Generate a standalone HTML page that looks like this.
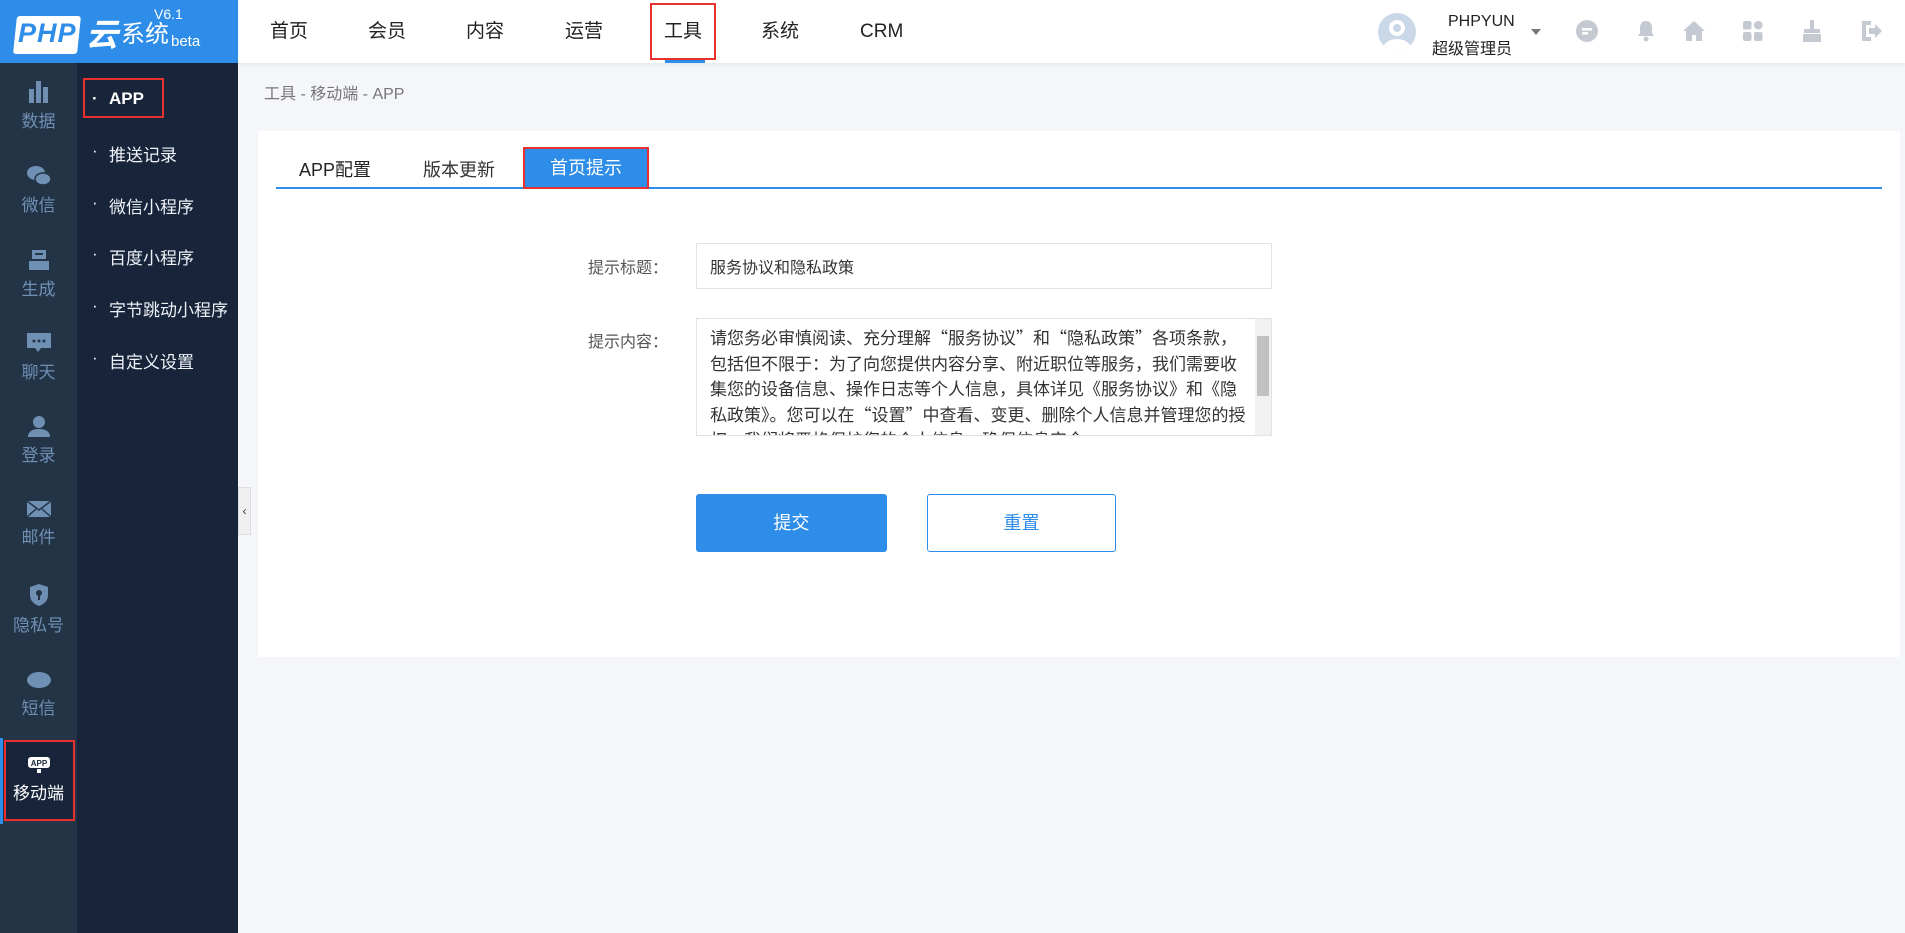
<!DOCTYPE html>
<html><head><meta charset="utf-8"><style>
*{margin:0;padding:0;box-sizing:border-box}
body{width:1905px;height:933px;overflow:hidden;background:#f4f6fa;font-family:"Liberation Sans","Noto Sans CJK SC",sans-serif;position:relative}
.a{position:absolute}
.hdr{left:238px;top:0;width:1667px;height:63px;background:#fff;box-shadow:0 2px 4px rgba(0,0,0,.06)}
.nav{top:0;height:63px;line-height:63px;font-size:19px;color:#222}
.ic{left:0;top:63px;width:77px;height:870px;background:#243447}
.sub{left:77px;top:63px;width:161px;height:870px;background:#17243a}
.it{left:0;width:77px;text-align:center;color:#6f8fb3;font-size:17px}
.it svg{display:block;margin:0 auto 4px}
.sm{left:92px;color:#eef2f7;font-size:17px}
.sm:before{content:"·";position:absolute;left:0;}
.sm span{margin-left:17px}
.hi{position:absolute;width:24px;height:24px;top:19px}
.cj{font-family:"Noto Sans CJK SC",sans-serif}
</style></head><body>
<div class="a" style="left:0;top:0;width:238px;height:63px;background:#2e8de8"></div>
<div class="a" style="left:15px;top:16px;width:64px;height:38px;background:#fff;border-radius:3px;transform:skewX(-6deg)"></div>
<div class="a" style="left:18px;top:18px;font:italic bold 27px 'Liberation Sans';color:#2e8de8;letter-spacing:1px">PHP</div>
<div class="a" style="left:86px;top:14px;font:bold italic 32px 'Noto Sans CJK SC';color:#fff;line-height:38px">云</div>
<div class="a" style="left:121px;top:20px;font-size:24px;color:#fff;line-height:30px">系统</div>
<div class="a" style="left:171px;top:33px;font-size:15px;color:#fff">beta</div>
<div class="a" style="left:154px;top:6px;font-size:14px;color:#fff">V6.1</div>
<div class="a hdr"></div>
<div class="a nav" style="left:270px">首页</div>
<div class="a nav" style="left:368px">会员</div>
<div class="a nav" style="left:466px">内容</div>
<div class="a nav" style="left:565px">运营</div>
<div class="a nav" style="left:664px">工具</div>
<div class="a" style="left:650px;top:3px;width:66px;height:57px;border:2px solid #e8302f"></div>
<div class="a" style="left:665px;top:60px;width:40px;height:3px;background:#2e8de8"></div>
<div class="a nav" style="left:761px">系统</div>
<div class="a nav" style="left:860px">CRM</div>
<div class="a" style="left:1378px;top:13px;width:38px;height:38px;border-radius:50%;background:#c9d7e6;overflow:hidden"><div class="a" style="left:11px;top:7px;width:16px;height:16px;border-radius:50%;border:4px solid #fff;"></div><div class="a" style="left:5px;top:26px;width:28px;height:20px;border-radius:50%;background:#fff"></div></div>
<div class="a" style="left:1448px;top:13px;font-size:16px;color:#222">PHPYUN</div>
<div class="a" style="left:1432px;top:35px;font-size:16px;color:#222">超级管理员</div>
<div class="a" style="left:1531px;top:29px;border:5px solid transparent;border-top:6px solid #777"></div>
<svg class="hi" style="left:1575px" viewBox="0 0 24 24"><circle cx="12" cy="12" r="11" fill="#c5c9d1"/><rect x="7" y="9" width="10" height="2.5" fill="#fff"/><rect x="7" y="13" width="6" height="2.5" fill="#fff"/></svg>
<svg class="hi" style="left:1634px" viewBox="0 0 24 24"><path d="M12 2c-4 0-6 3-6 7v5l-2 3h16l-2-3V9c0-4-2-7-6-7z" fill="#c5c9d1"/><circle cx="12" cy="20" r="2.5" fill="#c5c9d1"/></svg>
<svg class="hi" style="left:1682px" viewBox="0 0 24 24"><path d="M12 2L1 12h3v10h6v-6h4v6h6V12h3z" fill="#c5c9d1"/></svg>
<svg class="hi" style="left:1741px" viewBox="0 0 24 24"><rect x="2" y="2" width="8.5" height="8.5" rx="2" fill="#c5c9d1"/><rect x="13" y="2" width="8.5" height="8.5" rx="4" fill="#c5c9d1"/><rect x="2" y="13" width="8.5" height="9" rx="2" fill="#c5c9d1"/><rect x="13" y="13" width="8.5" height="9" rx="2" fill="#c5c9d1"/></svg>
<svg class="hi" style="left:1800px" viewBox="0 0 24 24"><rect x="10" y="1" width="4" height="10" fill="#c5c9d1"/><rect x="4" y="10" width="16" height="4" fill="#c5c9d1"/><path d="M3 15h18v8H3z" fill="#c5c9d1"/></svg>
<svg class="hi" style="left:1859px" viewBox="0 0 24 24"><path d="M3 2h9v4H7v12h5v4H3z" fill="#c5c9d1"/><path d="M10 9h6V5l7 7-7 7v-4h-6z" fill="#c5c9d1"/></svg>

<div class="a ic"></div>
<div class="a sub"></div>
<div class="a it" style="top:79px"><svg width="22" height="24" viewBox="0 0 22 24"><rect x="1" y="10" width="5" height="14" fill="#6f8fb3"/><rect x="8" y="2" width="5" height="22" fill="#6f8fb3"/><rect x="15" y="8" width="5" height="16" fill="#6f8fb3"/></svg>数据</div>
<div class="a it" style="top:165px"><svg width="26" height="22" viewBox="0 0 26 22"><ellipse cx="10" cy="8" rx="9" ry="7" fill="#6f8fb3"/><ellipse cx="17" cy="14" rx="8" ry="6" fill="#6f8fb3" stroke="#243447" stroke-width="1.5"/></svg>微信</div>
<div class="a it" style="top:249px"><svg width="22" height="22" viewBox="0 0 22 22"><rect x="4" y="1" width="14" height="9" fill="#6f8fb3"/><rect x="1" y="12" width="20" height="9" fill="#6f8fb3"/><rect x="7" y="4" width="8" height="2" fill="#243447"/></svg>生成</div>
<div class="a it" style="top:332px"><svg width="26" height="22" viewBox="0 0 26 22"><path d="M1 1h24v15H15l-3 4-3-4H1z" fill="#6f8fb3"/><circle cx="8" cy="9" r="1.5" fill="#243447"/><circle cx="13" cy="9" r="1.5" fill="#243447"/><circle cx="18" cy="9" r="1.5" fill="#243447"/></svg>聊天</div>
<div class="a it" style="top:415px"><svg width="22" height="22" viewBox="0 0 22 22"><circle cx="11" cy="7" r="6" fill="#6f8fb3"/><path d="M0 22c0-6 5-8 11-8s11 2 11 8z" fill="#6f8fb3"/></svg>登录</div>
<div class="a it" style="top:499px"><svg width="24" height="20" viewBox="0 0 24 20"><rect x="0" y="2" width="24" height="16" fill="#6f8fb3"/><path d="M0 2l12 9 12-9M0 18l9-8M24 18l-9-8" stroke="#243447" stroke-width="1.5" fill="none"/></svg>邮件</div>
<div class="a it" style="top:583px"><svg width="22" height="24" viewBox="0 0 22 24"><path d="M11 1l9 3v8c0 6-4 9-9 11-5-2-9-5-9-11V4z" fill="#6f8fb3"/><circle cx="11" cy="10" r="3" fill="#243447"/><rect x="10" y="11" width="2" height="6" fill="#243447"/></svg>隐私号</div>
<div class="a it" style="top:670px"><svg width="24" height="20" viewBox="0 0 24 20"><ellipse cx="12" cy="10" rx="12" ry="8" fill="#6f8fb3"/></svg>短信</div>
<div class="a" style="left:0;top:738px;width:3px;height:86px;background:#2e8de8"></div>
<div class="a" style="left:4px;top:740px;width:71px;height:81px;background:#17243a;border:2px solid #e8302f"></div>
<div class="a it" style="top:755px;color:#fff;font-size:17px"><svg width="26" height="20" viewBox="0 0 26 20"><rect x="2" y="2" width="22" height="11" rx="3" fill="#fff"/><text x="13" y="11" font-size="8" font-weight="bold" text-anchor="middle" fill="#17243a" font-family="Liberation Sans">APP</text><rect x="11" y="14" width="4" height="4" fill="#fff"/></svg>移动端</div>

<div class="a sm" style="top:89px;font-weight:bold;color:#fff"><span>APP</span></div>
<div class="a" style="left:83px;top:78px;width:81px;height:40px;border:2px solid #e8302f"></div>
<div class="a sm" style="top:141px"><span>推送记录</span></div>
<div class="a sm" style="top:193px"><span>微信小程序</span></div>
<div class="a sm" style="top:244px"><span>百度小程序</span></div>
<div class="a sm" style="top:296px"><span>字节跳动小程序</span></div>
<div class="a sm" style="top:348px"><span>自定义设置</span></div>
<div class="a" style="left:238px;top:487px;width:13px;height:48px;background:#f0f0f0;border:1px solid #ddd;font-size:12px;line-height:46px;text-align:center;color:#333">‹</div>

<div class="a" style="left:264px;top:80px;font-size:16px;color:#777">工具 - 移动端 - APP</div>
<div class="a" style="left:258px;top:131px;width:1642px;height:526px;background:#fff"></div>
<div class="a" style="left:276px;top:187px;width:1606px;height:2px;background:#2e8de8"></div>
<div class="a" style="left:299px;top:156px;font-size:18px;color:#222">APP配置</div>
<div class="a" style="left:423px;top:156px;font-size:18px;color:#333">版本更新</div>
<div class="a" style="left:523px;top:147px;width:126px;height:42px;background:#2e8de8;border:2px solid #e8302f;color:#fff;font-size:18px;text-align:center;line-height:38px">首页提示</div>

<div class="a cj" style="left:588px;top:254px;font-size:16px;color:#555">提示标题：</div>
<div class="a cj" style="left:696px;top:243px;width:576px;height:46px;border:1px solid #e2e2e2;border-radius:2px;padding-left:13px;line-height:44px;font-size:16px;color:#333">服务协议和隐私政策</div>
<div class="a cj" style="left:588px;top:328px;font-size:16px;color:#555">提示内容：</div>
<div class="a" style="left:696px;top:318px;width:576px;height:118px;border:1px solid #e2e2e2;overflow:hidden">
<div class="cj" style="padding:5px 20px 0 13px;font-size:17px;line-height:25.5px;color:#333">请您务必审慎阅读、充分理解“服务协议”和“隐私政策”各项条款，包括但不限于：为了向您提供内容分享、附近职位等服务，我们需要收集您的设备信息、操作日志等个人信息，具体详见《服务协议》和《隐私政策》。您可以在“设置”中查看、变更、删除个人信息并管理您的授权。我们将严格保护您的个人信息，确保信息安全。</div>
<div class="a" style="right:0;top:0;width:16px;height:116px;background:#f1f1f1"></div>
<div class="a" style="right:2px;top:17px;width:12px;height:60px;background:#c1c1c1"></div>
</div>
<div class="a" style="left:696px;top:494px;width:191px;height:58px;background:#2e8de8;border-radius:3px;color:#fff;font-size:18px;text-align:center;line-height:58px">提交</div>
<div class="a" style="left:927px;top:494px;width:189px;height:58px;border:1px solid #2e8de8;border-radius:3px;color:#2e8de8;font-size:18px;text-align:center;line-height:56px">重置</div>
</body></html>
